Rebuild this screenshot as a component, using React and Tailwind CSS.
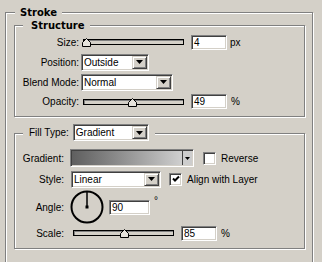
const sunken =
  'border border-t-[#808080] border-l-[#808080] border-r-white border-b-white shadow-[inset_1px_1px_0_#404040,inset_-1px_-1px_0_#d4d0c8]';
const etched = 'border border-[#808080] shadow-[inset_1px_1px_0_#fff,1px_1px_0_#fff]';

const Arrow = ({ w = 7, h = 4 }) => (
  <svg width={w} height={h} viewBox={`0 0 ${w} ${h}`}>
    <path d={`M0 0H${w}L${w / 2} ${h}Z`} fill="#000" />
  </svg>
);

const Select = ({ value, className = '' }) => (
  <div className={`flex h-[17px] bg-white p-px ${sunken} ${className}`}>
    <span className="flex-1 pl-[1px] leading-[13px] whitespace-nowrap overflow-hidden">{value}</span>
    <div className="flex items-center justify-center w-[15px] bg-[#d4d0c8] border border-t-[#d4d0c8] border-l-[#d4d0c8] border-r-[#404040] border-b-[#404040] shadow-[inset_1px_1px_0_#fff,inset_-1px_-1px_0_#808080]">
      <Arrow />
    </div>
  </div>
);

const Field = ({ value, className = '' }) => (
  <div className={`h-[15px] bg-white pl-[2px] leading-[13px] ${sunken} ${className}`}>{value}</div>
);

const Slider = ({ thumb, className = '' }) => (
  <div className={`relative w-[101px] h-[6px] border border-black bg-[#d4d0c8] shadow-[inset_1px_1px_0_#808080] ${className}`}>
    <svg className={`absolute top-[-2px] ${thumb}`} width="9" height="9" viewBox="0 0 9 9">
      <path d="M0.5 8.5V4.5L4.5 0.5L8.5 4.5V8.5Z" fill="#e6e3dc" stroke="#000" />
    </svg>
  </div>
);

const Check = ({ checked, className = '' }) => (
  <div className={`flex items-center justify-center w-[13px] h-[13px] bg-white ${sunken} ${className}`}>
    {checked && (
      <svg width="8" height="8" viewBox="0 0 8 8">
        <polyline points="1,3.5 3,5.5 7,1.5" fill="none" stroke="#000" strokeWidth="2" />
      </svg>
    )}
  </div>
);

const Dial = () => (
  <svg width="34" height="34" viewBox="0 0 34 34" className="ml-[6px]">
    <circle cx="17" cy="17" r="15.5" fill="none" stroke="#000" strokeWidth="2" />
    <line x1="17" y1="2" x2="17" y2="17" stroke="#000" strokeWidth="1.5" />
    <rect x="15.5" y="15.5" width="3" height="3" fill="#000" />
  </svg>
);

export default function App() {
  return (
    <div className="w-[322px] h-[262px] overflow-hidden bg-[#d4d0c8] pt-[6px] pl-[5px] pr-[9px] text-[10px] text-black font-['Liberation_Sans',Arial,sans-serif]">
      {/* Stroke */}
      <fieldset className={`${etched} pl-[8px] pr-[7px] pb-[40px]`}>
        <legend className="ml-px px-[5px] h-[13px] leading-[13px] bg-[#d4d0c8] font-bold font-['DejaVu_Sans',sans-serif]">
          Stroke
        </legend>

        {/* Structure */}
        <fieldset className={`${etched} pb-[5px]`}>
          <legend className="ml-[8px] pl-[8px] pr-[5px] h-[13px] leading-[13px] bg-[#d4d0c8] font-bold font-['DejaVu_Sans',sans-serif]">
            Structure
          </legend>
          <div className="flex items-center h-[20px]">
            <span className="w-[64px] text-right">Size:</span>
            <Slider className="ml-[4px]" thumb="left-[-2px]" />
            <Field value="4" className="ml-[7px] w-[36px]" />
            <span className="ml-[3px]">px</span>
          </div>
          <div className="flex items-center h-[20px]">
            <span className="w-[64px] text-right">Position:</span>
            <Select value="Outside" className="ml-[2px] w-[68px]" />
          </div>
          <div className="flex items-center h-[20px]">
            <span className="w-[64px] text-right">Blend Mode:</span>
            <Select value="Normal" className="ml-[2px] w-[92px]" />
          </div>
          <div className="flex items-center h-[19px]">
            <span className="w-[64px] text-right">Opacity:</span>
            <Slider className="ml-[4px]" thumb="left-[44px]" />
            <Field value="49" className="ml-[7px] w-[36px]" />
            <span className="ml-[4px]">%</span>
          </div>
        </fieldset>

        {/* Fill */}
        <fieldset className={`${etched} mt-[7px] pt-[4px] pb-[7px]`}>
          <legend className="ml-[8px] pl-[6px] pr-[6px] h-[19px] bg-[#d4d0c8]">
            <div className="flex items-start">
              <span className="leading-[17px]">Fill Type:</span>
              <Select value="Gradient" className="ml-[4px] w-[76px]" />
            </div>
          </legend>
          <div className="flex items-center h-[22px]">
            <span className="w-[49px] text-right">Gradient:</span>
            <div className={`flex ml-[6px] w-[124px] h-[18px] p-px ${sunken}`}>
              <div className="flex-1 bg-linear-to-r from-[#5f5f5f] to-[#cfcfcf]" />
              <div className="flex items-center justify-center w-[10px] bg-[#cdcdcd] border-l border-[#404040]">
                <Arrow w={5} h={3} />
              </div>
            </div>
            <Check className="ml-[9px]" />
            <span className="ml-[5px]">Reverse</span>
          </div>
          <div className="flex items-center h-[20px]">
            <span className="w-[49px] text-right">Style:</span>
            <Select value="Linear" className="ml-[7px] w-[90px] h-[16px]" />
            <Check checked className="ml-[8px]" />
            <span className="ml-[5px]">Align with Layer</span>
          </div>
          <div className="flex items-center h-[36px]">
            <span className="w-[49px] text-right">Angle:</span>
            <Dial />
            <Field value="90" className="ml-[5px] w-[41px]" />
            <span className="ml-[4px] self-start mt-[7px] leading-[10px]">°</span>
          </div>
          <div className="flex items-center h-[16px]">
            <span className="w-[49px] text-right">Scale:</span>
            <Slider className="ml-[9px]" thumb="left-[46px]" />
            <Field value="85" className="ml-[7px] w-[36px]" />
            <span className="ml-[4px]">%</span>
          </div>
        </fieldset>
      </fieldset>
    </div>
  );
}
